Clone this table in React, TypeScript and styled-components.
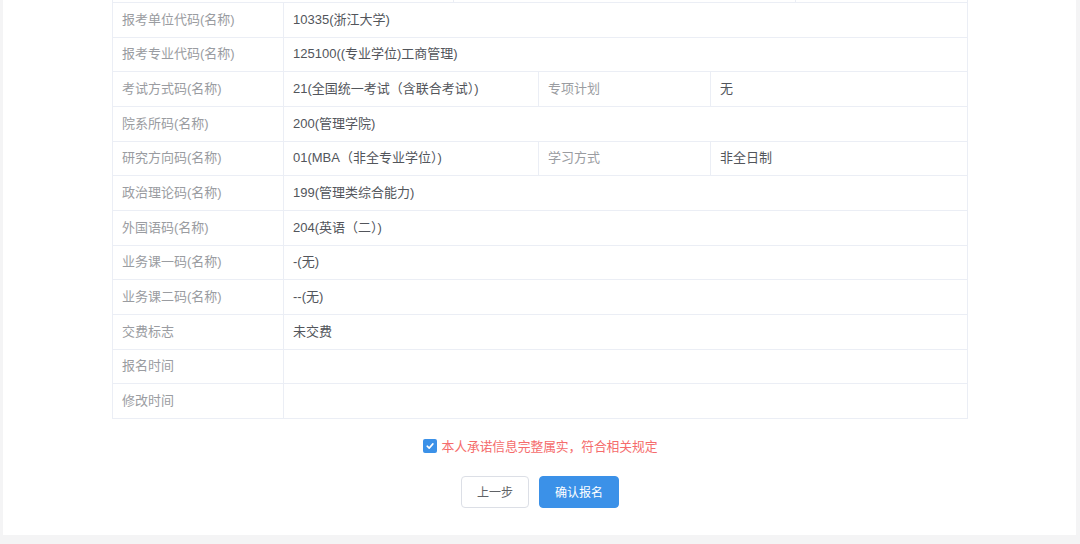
import React from "react";
import styled, { createGlobalStyle } from "styled-components";

const Global = createGlobalStyle`
  html, body { margin: 0; padding: 0; background: #f4f4f5; }
  body {
    font-family: "Liberation Sans", "Noto Sans CJK SC", sans-serif;
    -webkit-font-smoothing: antialiased;
  }
`;

const Page = styled.div`
  width: 1080px;
  height: 544px;
  overflow: hidden;
  background: #f4f4f5;
`;

const Card = styled.div`
  margin: 0 4px 0 3px;
  height: 535px;
  background: #fff;
  padding: 0 108px 0 109px;
  box-sizing: border-box;
  display: flex;
  flex-direction: column;
`;

const PrevStrip = styled.div`
  display: grid;
  grid-template-columns: 341px 342px 1fr;
  height: 2px;
  border-left: 1px solid #ebeef5;
  border-right: 1px solid #ebeef5;
  border-bottom: 1px solid #ebeef5;
`;

const PrevCell = styled.div<{ $last?: boolean }>`
  border-right: ${(p) => (p.$last ? "none" : "1px solid #ebeef5")};
`;

const Table = styled.div`
  border-left: 1px solid #ebeef5;
  border-right: 1px solid #ebeef5;
`;

const Row = styled.div`
  display: grid;
  grid-template-columns: 171px 255px 172px 1fr;
  height: 34.667px;
  border-bottom: 1px solid #ebeef5;
  box-sizing: border-box;
`;

const Cell = styled.div<{ $label?: boolean; $span?: number; $last?: boolean }>`
  grid-column: span ${(p) => p.$span ?? 1};
  display: flex;
  align-items: center;
  padding: 0 0 3px 9px;
  font-size: 13px;
  color: ${(p) => (p.$label ? "#9a9ca1" : "#52555b")};
  border-right: ${(p) => (p.$last ? "none" : "1px solid #ebeef5")};
  white-space: nowrap;
  overflow: hidden;
`;

const CheckRow = styled.label`
  margin-top: 20px;
  height: 14px;
  display: flex;
  align-items: center;
  justify-content: center;
  gap: 5px;
  color: #f56c6c;
  font-size: 12.8px;
  letter-spacing: -0.1px;
`;

const CheckBox = styled.span`
  width: 14px;
  height: 14px;
  border-radius: 2px;
  background: #3b91e8;
  display: flex;
  align-items: center;
  justify-content: center;
`;

const ButtonRow = styled.div`
  margin-top: 23px;
  display: flex;
  justify-content: center;
  gap: 10px;
`;

const Button = styled.button<{ $primary?: boolean }>`
  height: 32px;
  padding: 0 15px;
  font-size: 12px;
  font-family: inherit;
  border-radius: 4px;
  border: 1px solid ${(p) => (p.$primary ? "#3b91e8" : "#dcdfe6")};
  background: ${(p) => (p.$primary ? "#3b91e8" : "#fff")};
  color: ${(p) => (p.$primary ? "#fff" : "#606266")};
  cursor: pointer;
`;

type R = { label: string; value: string; label2?: string; value2?: string };

const rows: R[] = [
  { label: "报考单位代码(名称)", value: "10335(浙江大学)" },
  { label: "报考专业代码(名称)", value: "125100((专业学位)工商管理)" },
  { label: "考试方式码(名称)", value: "21(全国统一考试（含联合考试）)", label2: "专项计划", value2: "无" },
  { label: "院系所码(名称)", value: "200(管理学院)" },
  { label: "研究方向码(名称)", value: "01(MBA（非全专业学位）)", label2: "学习方式", value2: "非全日制" },
  { label: "政治理论码(名称)", value: "199(管理类综合能力)" },
  { label: "外国语码(名称)", value: "204(英语（二）)" },
  { label: "业务课一码(名称)", value: "-(无)" },
  { label: "业务课二码(名称)", value: "--(无)" },
  { label: "交费标志", value: "未交费" },
  { label: "报名时间", value: "" },
  { label: "修改时间", value: "" },
];

export default function App() {
  return (
    <Page>
      <Global />
      <Card>
        <PrevStrip>
          <PrevCell />
          <PrevCell />
          <PrevCell $last />
        </PrevStrip>
        <Table>
          {rows.map((r) => (
            <Row key={r.label}>
              <Cell $label>{r.label}</Cell>
              {r.label2 ? (
                <>
                  <Cell>{r.value}</Cell>
                  <Cell $label>{r.label2}</Cell>
                  <Cell $last>{r.value2}</Cell>
                </>
              ) : (
                <Cell $span={3} $last>
                  {r.value}
                </Cell>
              )}
            </Row>
          ))}
        </Table>
        <CheckRow>
          <CheckBox>
            <svg width="10" height="10" viewBox="0 0 10 10">
              <path d="M2.2 5.2 L4.2 7.1 L7.9 2.9" fill="none" stroke="#fff" strokeWidth="1.6" strokeLinecap="round" strokeLinejoin="round" />
            </svg>
          </CheckBox>
          本人承诺信息完整属实，符合相关规定
        </CheckRow>
        <ButtonRow>
          <Button>上一步</Button>
          <Button $primary>确认报名</Button>
        </ButtonRow>
      </Card>
    </Page>
  );
}
